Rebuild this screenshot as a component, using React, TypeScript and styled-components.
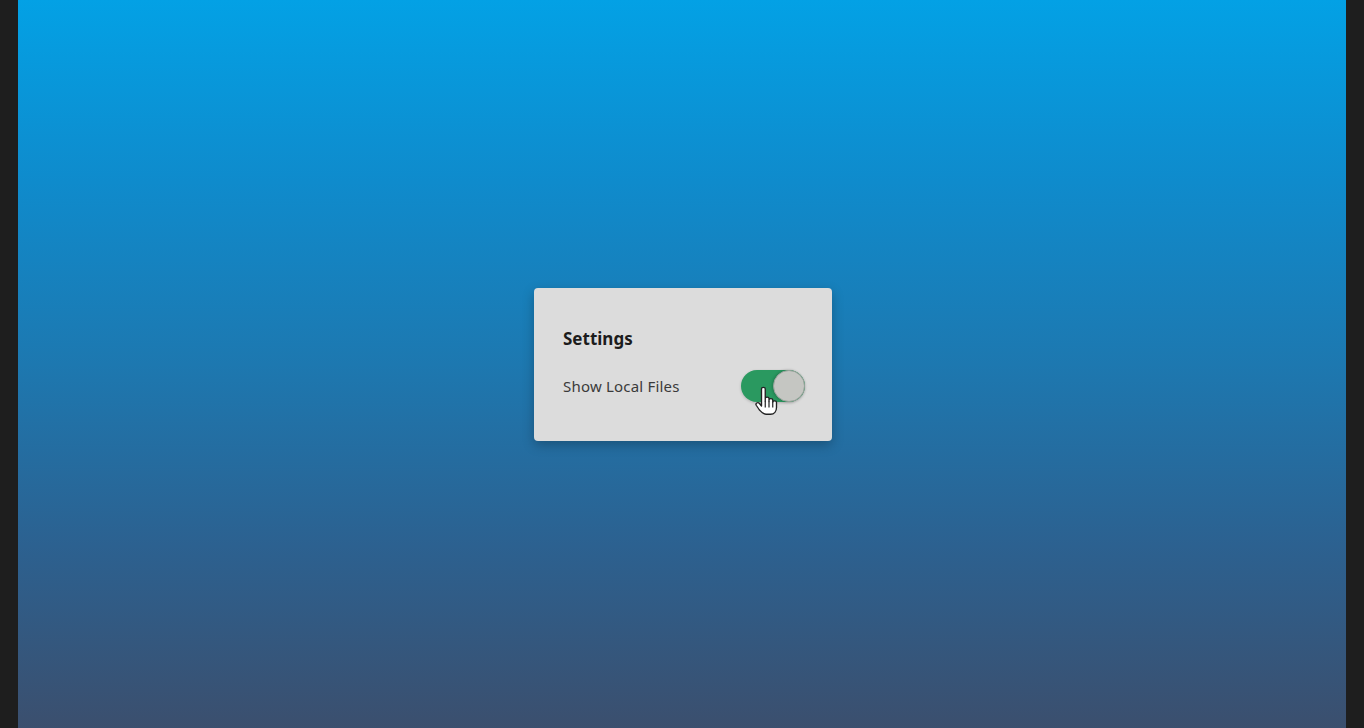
import React from "react";
import styled, { createGlobalStyle } from "styled-components";

const Global = createGlobalStyle`
  html, body { margin: 0; padding: 0; height: 100%; }
  body { font-family: "Noto Sans", "Open Sans", sans-serif; background: #1e1e1e; }
  #root { height: 100%; }
`;

const Frame = styled.div`
  height: 728px;
  background: #1e1e1e;
  padding: 0 18px;
  box-sizing: border-box;
  display: flex;
`;

const Stage = styled.main`
  flex: 1;
  background: linear-gradient(180deg, #03a1e5 0%, #0f8bcc 25%, #1d78b0 50%, #2c6190 75%, #3b4f6e 100%);
  display: flex;
  align-items: center;
  justify-content: center;
  padding-left: 2px;
`;

const Card = styled.section`
  width: 298px;
  height: 153px;
  box-sizing: border-box;
  background: #dcdcdc;
  border-radius: 4px;
  box-shadow: 0 4px 12px rgba(0, 0, 0, 0.25);
  padding: 39px 27px 0 29px;
  display: flex;
  flex-direction: column;
  gap: 19px;
`;

const Title = styled.h2`
  margin: 0;
  font-size: 17px;
  font-weight: 700;
  color: #1c1c1c;
  line-height: 24px;
`;

const Row = styled.div`
  display: flex;
  align-items: center;
  justify-content: space-between;
`;

const Label = styled.span`
  font-size: 15px;
  color: #3a3a3a;
  letter-spacing: 0.2px;
`;

const Toggle = styled.button<{ $on: boolean }>`
  position: relative;
  width: 64px;
  height: 32px;
  border: none;
  border-radius: 16px;
  padding: 0;
  background: ${(p) => (p.$on ? "#2a9960" : "#aaa")};
  box-shadow: 0 1px 3px rgba(0, 0, 0, 0.2);
  cursor: pointer;
`;

const Knob = styled.span<{ $on: boolean }>`
  position: absolute;
  top: 0;
  left: ${(p) => (p.$on ? "32px" : "0")};
  width: 32px;
  height: 32px;
  box-sizing: border-box;
  border-radius: 50%;
  background: #c5c6c2;
  border: 1px solid #9aa39c;
  box-shadow: -1px 0 3px rgba(0, 0, 0, 0.2);
`;

const Pointer = styled.svg`
  position: absolute;
  left: 13px;
  top: 15px;
  width: 24px;
  height: 30px;
  pointer-events: none;
`;

export default function App() {
  const [on, setOn] = React.useState(true);
  return (
    <>
      <Global />
      <Frame>
        <Stage>
          <Card>
            <Title>Settings</Title>
            <Row>
              <Label>Show Local Files</Label>
              <Toggle $on={on} onClick={() => setOn(!on)} aria-label="Show Local Files">
                <Knob $on={on} />
                <Pointer viewBox="0 0 16 20">
                  <path
                    d="M5 2.5 C5 1.3 7.5 1.3 7.5 2.5 L7.5 11 L7.5 9 C7.5 7.8 10 7.8 10 9 L10 11 L10 10 C10 8.8 12.5 8.8 12.5 10 L12.5 11.5 C12.5 10.3 15 10.3 15 11.5 L15 15 C15 17.5 13.5 19.5 11 19.5 L8 19.5 C6 19.5 5 18 3.5 16.5 L1.5 13.5 C0.8 12.3 2.5 11.2 3.5 12.2 L5 14 Z"
                    fill="#fff"
                    stroke="#222"
                    strokeWidth="0.9"
                    strokeLinejoin="round"
                  />
                  <path d="M7.5 11 L7.5 15 M10 11 L10 15 M12.5 11.5 L12.5 15" stroke="#222" strokeWidth="0.8" />
                </Pointer>
              </Toggle>
            </Row>
          </Card>
        </Stage>
      </Frame>
    </>
  );
}
